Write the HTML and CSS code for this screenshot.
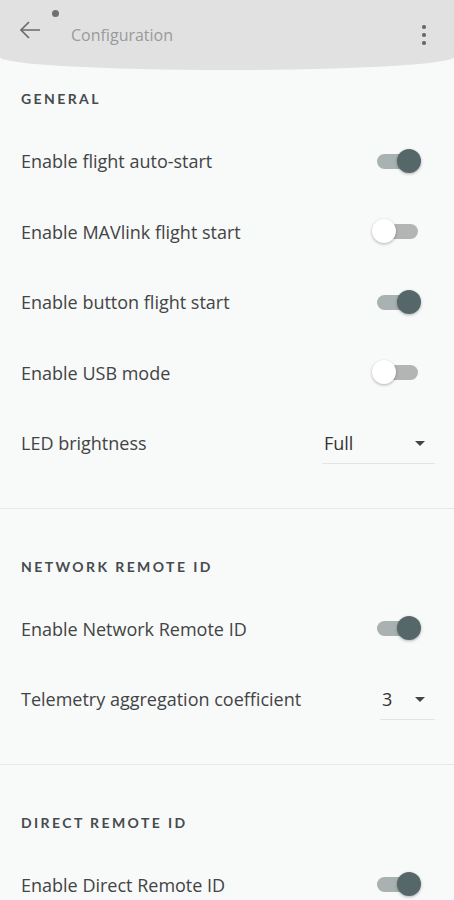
FILE: index.html
```html
<!DOCTYPE html>
<html lang="en">
<head>
  <meta charset="UTF-8">
  <meta name="viewport" content="width=device-width, initial-scale=1.0">
  <title>Configuration</title>
  <link rel="stylesheet" href="styles.css">
</head>
<body>
  <div class="header">
    <button class="back">
      <svg width="22" height="20" viewBox="0 0 22 20"><path d="M21 10H2 M10 2L2 10l8 8" fill="none" stroke="#6b6b6b" stroke-width="1.7"/></svg>
    </button>
    <span class="dot"></span>
    <div class="title">Configuration</div>
    <button class="menu">
      <svg width="6" height="22" viewBox="0 0 6 22"><circle cx="3" cy="3" r="2.1" fill="#666"/><circle cx="3" cy="11" r="2.1" fill="#666"/><circle cx="3" cy="19" r="2.1" fill="#666"/></svg>
    </button>
  </div>

  <div class="section first">
    <div class="section-title">GENERAL</div>
    <div class="row"><span class="label">Enable flight auto-start</span><span class="switch on"></span></div>
    <div class="row"><span class="label">Enable MAVlink flight start</span><span class="switch"></span></div>
    <div class="row"><span class="label">Enable button flight start</span><span class="switch on"></span></div>
    <div class="row"><span class="label">Enable USB mode</span><span class="switch"></span></div>
    <div class="row">
      <span class="label">LED brightness</span>
      <div class="select wide"><span>Full</span><span class="caret"></span></div>
    </div>
  </div>

  <div class="section">
    <div class="section-title">NETWORK REMOTE ID</div>
    <div class="row"><span class="label">Enable Network Remote ID</span><span class="switch on"></span></div>
    <div class="row">
      <span class="label">Telemetry aggregation coefficient</span>
      <div class="select"><span>3</span><span class="caret"></span></div>
    </div>
  </div>

  <div class="section">
    <div class="section-title">DIRECT REMOTE ID</div>
    <div class="row"><span class="label">Enable Direct Remote ID</span><span class="switch on"></span></div>
  </div>
</body>
</html>
```

FILE: styles.css
```css
body {
  margin: 0;
  padding: 0;
  font-family: "Open Sans", Lato, sans-serif;
  background-color: #f8f9f9;
  color: #424445;
  overflow: hidden;
}

.header {
  position: relative;
  height: 70px;
  background-color: #e1e1e1;
  border-radius: 0 0 50% 50% / 0 0 13px 13px;
  display: flex;
  align-items: flex-start;
  padding: 0 27px 0 19px;
  box-sizing: border-box;
}

.header button {
  background: none;
  border: none;
  padding: 0;
  cursor: pointer;
}

.back {
  margin-top: 20px;
  height: 20px;
}

.dot {
  position: absolute;
  left: 52px;
  top: 10px;
  width: 7px;
  height: 7px;
  border-radius: 50%;
  background-color: #707070;
}

.title {
  margin: 24px 0 0 30px;
  font-size: 16px;
  color: #9a9a9a;
  flex: 1;
}

.menu {
  margin-top: 24px;
}

.section {
  padding: 0 20px 29px 21px;
  border-bottom: 1px solid #e6e8e8;
}

.section:last-child {
  border-bottom: none;
}

.section-title {
  margin: 48px 0 17px;
  line-height: 20px;
  font-family: Lato, sans-serif;
  font-size: 14px;
  font-weight: bold;
  letter-spacing: 2.4px;
  color: #464b4e;
}

.first .section-title {
  margin-top: 19px;
}

.row {
  height: 70.5px;
  display: flex;
  align-items: center;
  justify-content: space-between;
}

.label {
  font-size: 18px;
}

.switch {
  position: relative;
  width: 41px;
  height: 15px;
  margin-right: 16px;
  border-radius: 8px;
  background-color: #b3b5b5;
}

.switch::after {
  content: "";
  position: absolute;
  top: -5px;
  left: -5px;
  width: 24px;
  height: 24px;
  border-radius: 50%;
  background-color: #fff;
  box-shadow: 0 1px 3px rgba(0, 0, 0, 0.3);
}

.switch.on {
  background-color: #a9b1b1;
}

.switch.on::after {
  left: 20px;
  background-color: #56676a;
}

.select {
  width: 55px;
  height: 40px;
  margin-top: 1px;
  border-bottom: 1px solid #e3e5e5;
  display: flex;
  align-items: center;
  justify-content: space-between;
  padding: 0 10px 0 2px;
  box-sizing: border-box;
  font-size: 18px;
  color: #333;
  margin-right: -1px;
}

.select.wide {
  width: 113px;
}

.caret {
  width: 0;
  height: 0;
  border-left: 5px solid transparent;
  border-right: 5px solid transparent;
  border-top: 5px solid #444;
}
```
